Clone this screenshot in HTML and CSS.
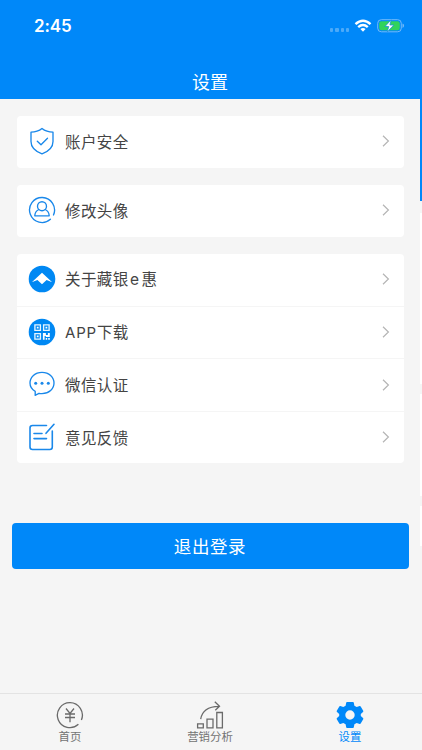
FILE: index.html
```
<!DOCTYPE html>
<html lang="zh-CN">
<head>
<meta charset="utf-8">
<title>设置</title>
<link rel="stylesheet" href="styles.css">
</head>
<body>
<div class="app">
  <header class="header">
    <div class="status">
      <span class="time">2:45</span>
      <div class="indicators">
        <span class="signal"><i></i><i></i><i></i><i></i></span>
        <svg class="wifi" width="18" height="14" viewBox="0 0 18 14" fill="none" stroke="#fff" stroke-width="2.4">
          <path d="M1.5 5.1Q9 -1.7 16.5 5.1"/><path d="M4.2 8.1Q9 3.9 13.8 8.1"/><path d="M6.4 10.1Q9 8 11.6 10.1L9 12.8Z" fill="#fff" stroke="none"/>
        </svg>
        <svg class="battery" width="28" height="14" viewBox="0 0 28 14">
          <rect x=".7" y=".7" width="23.6" height="12.1" rx="3.6" fill="none" stroke="#72bafa"/>
          <rect x="2.2" y="2.2" width="20.6" height="9.1" rx="2.2" fill="#32d35b"/>
          <path d="M25.5 4.6q1.6.6 1.6 2.2t-1.6 2.2z" fill="#72bafa"/>
          <path d="M14.2.8 8 7.5h3.7l-1.4 5.4 6.5-6.9h-3.9z" fill="#fff" stroke="#1c91d5" stroke-width=".8"/>
        </svg>
      </div>
    </div>
    <h1 class="title">设置</h1>
  </header>
  <div class="body">
    <main class="content">
      <section class="card">
        <a class="row">
          <svg class="icon" viewBox="0 0 28 28"><path d="M14 1.5c3 2.4 6.5 3.6 11 3.7v9.3c0 6.4-4.600 10-11 12.400C7.600 24.500 3 20.900 3 14.500V5.200C7.500 5.100 11 3.900 14 1.500Z"/><path d="m9.300 14.200 3.700 3.500 6.500-6.500"/></svg>
          <span class="label">账户安全</span>
          <svg class="arrow" viewBox="0 0 8 12"><path d="m1 .8 5.400 5.200L1 11.200"/></svg>
        </a>
      </section>
      <section class="card">
        <a class="row">
          <svg class="icon" viewBox="0 0 28 28"><path d="M22.400 23.300A12.500 12.500 0 1 1 25.500 19"/><circle cx="14" cy="10.200" r="4.500"/><path d="M10.800 13.500c-2.500 1.200-3.900 3.300-4 6.300h14.400c-.1-3-1.500-5.100-4-6.300"/></svg>
          <span class="label">修改头像</span>
          <svg class="arrow" viewBox="0 0 8 12"><path d="m1 .8 5.400 5.200L1 11.200"/></svg>
        </a>
      </section>
      <section class="card">
        <a class="row">
          <svg class="icon" viewBox="0 0 28 28"><circle class="solid" cx="14" cy="14" r="13.300"/><path class="mark" d="M14 7.700 24.200 17.200l-5.600-2.200L14 19.300 9.400 15 3.800 17.200Z"/></svg>
          <span class="label">关于藏银<span class="latin-e">e</span>惠</span>
          <svg class="arrow" viewBox="0 0 8 12"><path d="m1 .8 5.400 5.200L1 11.200"/></svg>
        </a>
        <a class="row">
          <svg class="icon" viewBox="0 0 28 28"><circle class="solid" cx="14" cy="14" r="13.300"/><g class="qr"><path d="M6.900 6.900h5.500v5.500H6.900zM15.600 6.900h5.500v5.500h-5.500zM6.900 15.600h5.500v5.500H6.900z"/><path class="mark" d="M8.800 8.800h1.800v1.800H8.800zM17.500 8.800h1.800v1.800h-1.800zM8.800 17.500h1.800v1.800H8.800zM14.900 14.900h3v2h2v-2h1.900v4h-4v-1h-1.200v3.900h-1.700zM17.700 20h1.500v1.800h-1.500zM20.200 20h1.600v1.800h-1.600z"/></g></svg>
          <span class="label"><span class="latin">APP</span>下载</span>
          <svg class="arrow" viewBox="0 0 8 12"><path d="m1 .8 5.400 5.200L1 11.200"/></svg>
        </a>
        <a class="row">
          <svg class="icon" viewBox="0 0 28 28"><path d="M7.200 25.300v-4C3.800 19.400 2 16.500 2 13c0-6 5-10.700 12-10.700S26 7 26 13s-5 10.600-12 10.600c-1 0-2-.1-3-.3-1.200.5-2.400 1.200-3.800 2Z"/><g class="dots"><circle cx="7.700" cy="13.200" r="1.500"/><circle cx="14" cy="13.200" r="1.500"/><circle cx="20.300" cy="13.200" r="1.500"/></g></svg>
          <span class="label">微信认证</span>
          <svg class="arrow" viewBox="0 0 8 12"><path d="m1 .8 5.400 5.200L1 11.200"/></svg>
        </a>
        <a class="row">
          <svg class="icon pen" viewBox="0 0 28 28"><path d="M18.500 2.500h-14Q2 2.500 2 5v19q0 2.500 2.500 2.500h17.300q2.500 0 2.500-2.500V8M6 10.500h8M6 15.600h12.500M18 10.300l8-9"/></svg>
          <span class="label">意见反馈</span>
          <svg class="arrow" viewBox="0 0 8 12"><path d="m1 .8 5.400 5.200L1 11.200"/></svg>
        </a>
      </section>
      <button class="logout">退出登录</button>
    </main>
    <aside class="peek"><i class="banner"></i><i class="block tall"></i><i class="block mid"></i><i class="block low"></i></aside>
  </div>
  <nav class="tabs">
    <a class="tab">
      <svg class="tab-icon" viewBox="0 0 28 28"><path d="M22.400 23.300A12.500 12.500 0 1 1 25.400 19"/><path d="m10 7.500 4 5 4-5M9 13h10M9 16.500h10M14 12.500v8.800"/></svg>
      <span>首页</span>
    </a>
    <a class="tab">
      <svg class="tab-icon" viewBox="0 0 28 28"><path d="M1.600 22.900h5.700v4H1.600zM11 18.200h6v8.700h-6zM20.800 11.500h5.600v15.400h-5.600z"/><path d="M4.700 18.200C5.800 10.500 11 5.500 23 5.300M18.800.8l4.700 4.500-4.200 4"/></svg>
      <span>营销分析</span>
    </a>
    <a class="tab active">
      <svg class="tab-icon" viewBox="0 0 28 28"><path fill-rule="evenodd" d="M11 1h6q.7 0 .8.700l.6 3 2.300 1.400 3-1q.6-.2 1 .4l2.500 4.300q.4.700-.2 1.200l-2.200 2v2l2.200 2q.6.500.2 1.200l-2.500 4.300q-.4.600-1 .4l-3-1-2.300 1.400-.6 3q-.1.700-.8.700h-6q-.7 0-.8-.7l-.6-3-2.300-1.400-3 1q-.6.200-1-.4L.8 18.200q-.4-.7.200-1.200l2.200-2v-2L1 11q-.6-.5-.2-1.200l2.500-4.300q.4-.6 1-.4l3 1 2.300-1.400.6-3Q10.300 1 11 1ZM14 9.300a4.700 4.700 0 1 0 0 9.400 4.700 4.700 0 0 0 0-9.400Z"/></svg>
      <span>设置</span>
    </a>
  </nav>
</div>
</body>
</html>
```
FILE: styles.css
```
* { box-sizing: border-box; }
body { margin: 0; font-family: "Noto Sans CJK SC", sans-serif; }
.app { display: flex; flex-direction: column; width: 422px; height: 750px; overflow: hidden; background: #f5f5f5; }
.header { flex: 0 0 99px; background: #0088f9; color: #fff; }
.status { display: flex; justify-content: space-between; align-items: center; height: 52px; padding: 0 17px 0 34px; }
.time { font: 600 17px/20px Inter, sans-serif; letter-spacing: -.1px; }
.indicators { display: flex; align-items: center; }
.signal { display: flex; gap: 2px; margin: 8px 5px 0 0; }
.signal i { width: 3.200px; height: 3.200px; border-radius: 1px; background: #4caaf9; }
.wifi { margin-right: 5px; }
.title { margin: 0; text-align: center; font-size: 18px; font-weight: 400; line-height: 26px; padding: 16px 2px 0 0; }
.body { display: flex; flex: 1; min-height: 0; }
.content { flex: 0 0 420px; padding: 16.500px 11px 0 12px; }
.card { width: 386.500px; margin: 0 0 16.700px 5px; border-radius: 4px; background: #fff; overflow: hidden; }
.row { display: flex; align-items: center; height: 52.400px; padding: 0 13px 0 11px; }
.row + .row { border-top: 1px solid #f5f5f5; }
.icon { width: 28px; height: 28px; margin: 0 9px 2px 0; fill: none; stroke: #1a88ea; stroke-width: 1.350; stroke-linecap: round; stroke-linejoin: round; }
.pen { stroke-width: 1.600; }
.solid { fill: #0088f3; stroke: none; }
.mark { fill: #fff; stroke: none; }
.qr { stroke: #e6f5ff; stroke-linejoin: miter; }
.dots { fill: #1a88ea; stroke: none; }
.label { flex: 1; padding-bottom: 1.500px; color: #444; font-size: 15.500px; line-height: 24px; letter-spacing: .4px; }
.latin { font-family: Inter, sans-serif; font-size: 15px; letter-spacing: .8px; }
.latin-e { margin: 0 2px 0 1.500px; font-family: Inter, sans-serif; }
.arrow { width: 8px; height: 12px; margin: 0 1px 1px 0; fill: none; stroke: #b5b5b5; stroke-width: 1.200; }
.logout { display: block; width: 397px; height: 46px; margin: 59.800px 0 0; padding: 0 1px 2px 0; border: 0; border-radius: 4px; background: #0088f9; color: #fff; font-family: inherit; font-size: 17.500px; letter-spacing: .6px; }
.peek { flex: 0 0 2px; display: flex; flex-direction: column; }
.banner { height: 102px; margin-bottom: 12px; background: #0088f9; }
.block { margin-bottom: 10px; background: #fff; }
.tall { height: 171px; }
.mid { height: 102px; }
.low { height: 40px; }
.tabs { flex: 0 0 57px; display: flex; padding-right: 2px; border-top: 1px solid #e3e3e3; }
.tab { flex: 1; display: flex; flex-direction: column; align-items: center; padding-top: 7px; color: #737373; font-size: 11.400px; line-height: 15px; }
.tab-icon { width: 28px; height: 28px; fill: none; stroke: #6a6a6a; stroke-width: 1.300; }
.active { color: #0088f9; }
.active .tab-icon { fill: #0088f9; stroke: none; }
```
